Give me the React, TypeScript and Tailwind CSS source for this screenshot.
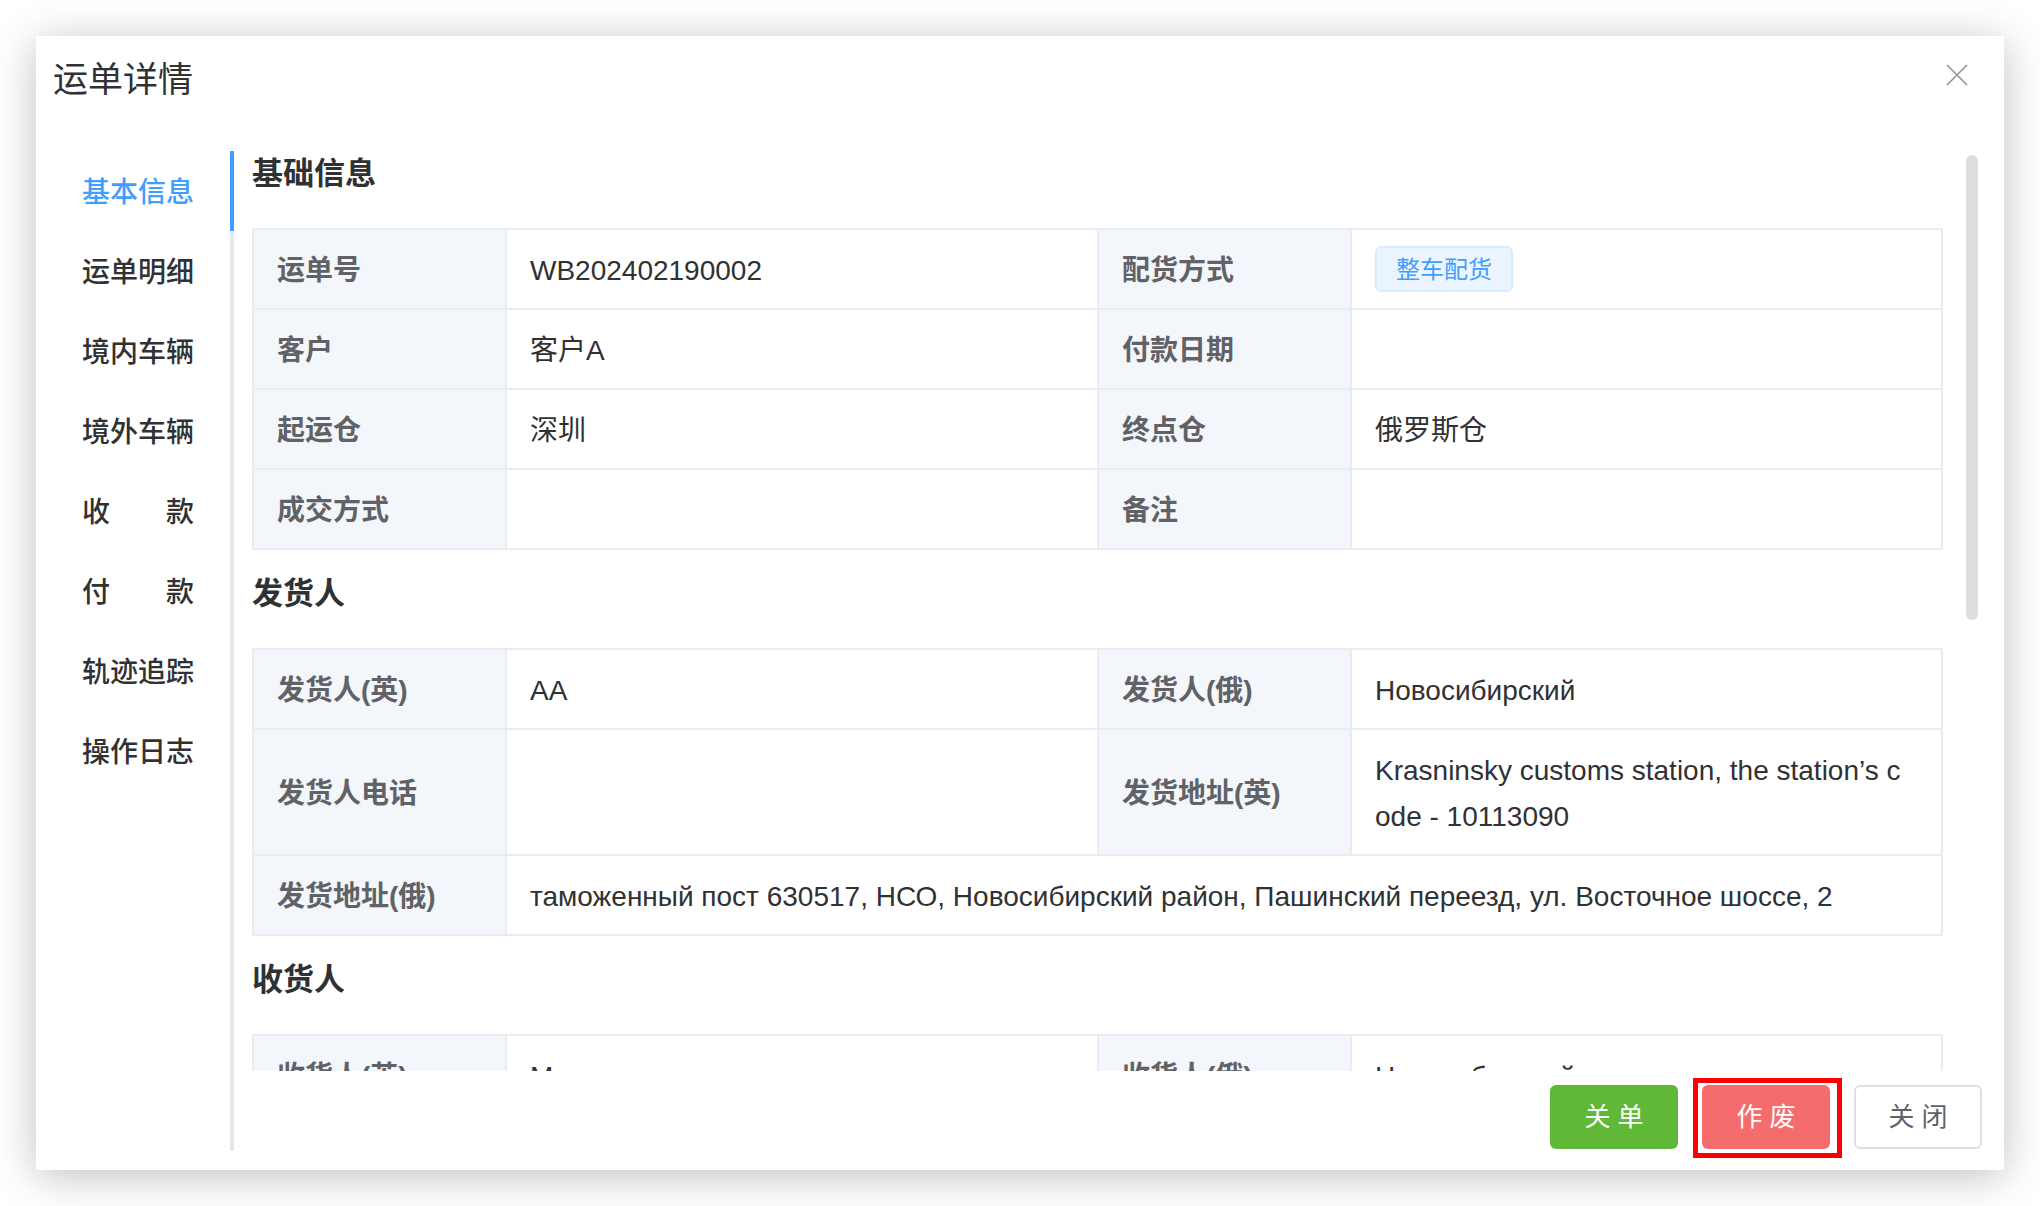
import React from "react";

const navItems = ["基本信息", "运单明细", "境内车辆", "境外车辆", "收款", "付款", "轨迹追踪", "操作日志"];

const labelCls = "border-2 border-[#E9ECF3] bg-[#F3F6FA] px-[23px] pt-[18px] pb-[14px] leading-[46px] font-bold text-[#606266] align-middle";
const valueCls = "border-2 border-[#E9ECF3] px-[23px] pt-[18px] pb-[14px] leading-[46px] text-[#303133] align-middle break-all";

const Heading: React.FC<{ text: string; first?: boolean }> = ({ text, first }) => (
    <div className={`${first ? "" : "mt-[21px]"} mb-[32px] h-[45px] leading-[45px] text-[31px] font-bold text-[#303133]`}>{text}</div>
);

const Cols = () => (
    <colgroup>
        <col className="w-[253px]" />
        <col className="w-[592px]" />
        <col className="w-[253px]" />
        <col className="w-[591px]" />
    </colgroup>
);

export default function App() {
    return (
        <div className="min-h-screen bg-white pt-[36px] pl-[36px] font-['Liberation_Sans','Noto_Sans_CJK_SC',sans-serif]">
            <div className="w-[1968px] h-[1134px] bg-white shadow-[0_6px_40px_rgba(0,0,0,0.25)] flex flex-col">
                {/* header */}
                <div className="h-[68px] pt-[20px] pl-[17px] pr-[36px] flex items-center justify-between">
                    <div className="leading-[48px] text-[35px] text-[#303133]">运单详情</div>
                    <svg width="22" height="22" viewBox="0 0 22 22" className="-mt-[10px]">
                        <path d="M1 1 L21 21 M21 1 L1 21" stroke="#909399" strokeWidth="1.6" fill="none" />
                    </svg>
                </div>

                {/* body */}
                <div className="mt-[47px] h-[1000px] flex pr-[22px]">
                    <div className="w-[198px] border-r-4 border-[#E4E7ED] h-full">
                        {navItems.map((item, i) => (
                            <div key={item} className="relative h-[80px] flex items-center justify-end pr-[36px]">
                                {item.length === 2 ? (
                                    <div className="w-[112px] pt-[4px] flex justify-between text-[28px] font-medium text-[#303133]">
                                        <span>{item[0]}</span>
                                        <span>{item[1]}</span>
                                    </div>
                                ) : (
                                    <div className={`pt-[4px] text-[28px] font-medium ${i === 0 ? "text-[#409EFF]" : "text-[#303133]"}`}>{item}</div>
                                )}
                                {i === 0 && <div className="absolute -right-[4px] top-0 w-[4px] h-[80px] bg-[#409EFF]" />}
                            </div>
                        ))}
                    </div>

                    <div className="ml-[17px] flex-1 flex flex-col">
                        <div className="relative h-[920px]">
                            <div className="w-[1692px] h-full overflow-hidden pl-[1px] text-[28px]">
                                <Heading text="基础信息" first />
                                <table className="w-[1689px] table-fixed border-collapse">
                                    <Cols />
                                    <tbody>
                                        <tr>
                                            <td className={labelCls}>运单号</td>
                                            <td className={valueCls}>WB202402190002</td>
                                            <td className={labelCls}>配货方式</td>
                                            <td className="border-2 border-[#E9ECF3] px-[23px] py-[16px] align-middle">
                                                <span className="inline-flex align-middle h-[46px] items-center pt-[2px] px-[19px] rounded-[6px] border-2 border-[#D9ECFF] bg-[#ECF5FF] text-[#409EFF] text-[24px] leading-none">整车配货</span>
                                            </td>
                                        </tr>
                                        <tr>
                                            <td className={labelCls}>客户</td>
                                            <td className={valueCls}>客户A</td>
                                            <td className={labelCls}>付款日期</td>
                                            <td className={valueCls}></td>
                                        </tr>
                                        <tr>
                                            <td className={labelCls}>起运仓</td>
                                            <td className={valueCls}>深圳</td>
                                            <td className={labelCls}>终点仓</td>
                                            <td className={valueCls}>俄罗斯仓</td>
                                        </tr>
                                        <tr>
                                            <td className={labelCls}>成交方式</td>
                                            <td className={valueCls}></td>
                                            <td className={labelCls}>备注</td>
                                            <td className={valueCls}></td>
                                        </tr>
                                    </tbody>
                                </table>

                                <Heading text="发货人" />
                                <table className="w-[1689px] table-fixed border-collapse">
                                    <Cols />
                                    <tbody>
                                        <tr>
                                            <td className={labelCls}>发货人(英)</td>
                                            <td className={valueCls}>AA</td>
                                            <td className={labelCls}>发货人(俄)</td>
                                            <td className={valueCls}>Новосибирский</td>
                                        </tr>
                                        <tr>
                                            <td className={labelCls}>发货人电话</td>
                                            <td className={valueCls}></td>
                                            <td className={labelCls}>发货地址(英)</td>
                                            <td className="border-2 border-[#E9ECF3] pl-[23px] pr-[40px] pt-[18px] pb-[14px] leading-[46px] text-[#303133] align-middle break-all">
                                                Krasninsky customs station, the station’s code - 10113090
                                            </td>
                                        </tr>
                                        <tr>
                                            <td className={labelCls}>发货地址(俄)</td>
                                            <td className={valueCls} colSpan={3}>
                                                таможенный пост 630517, НСО, Новосибирский район, Пашинский переезд, ул. Восточное шоссе, 2
                                            </td>
                                        </tr>
                                    </tbody>
                                </table>

                                <Heading text="收货人" />
                                <table className="w-[1689px] table-fixed border-collapse">
                                    <Cols />
                                    <tbody>
                                        <tr>
                                            <td className={labelCls}>收货人(英)</td>
                                            <td className={valueCls}>Mary</td>
                                            <td className={labelCls}>收货人(俄)</td>
                                            <td className={valueCls}>Новосибирский</td>
                                        </tr>
                                    </tbody>
                                </table>
                            </div>
                            <div className="absolute right-[4px] top-[4px] w-[12px] h-[465px] rounded-full bg-[#DDDEE0]" />
                        </div>

                        {/* footer */}
                        <div className="mt-[14px] flex justify-end gap-[24px]">
                            <button className="w-[128px] h-[64px] rounded-[6px] bg-[#5FB936] text-white text-[26px]">关 单</button>
                            <div className="relative">
                                <button className="w-[128px] h-[64px] rounded-[6px] bg-[#F56C6C] text-white text-[26px]">作 废</button>
                                <div className="absolute -left-[9px] -top-[7px] -right-[12px] -bottom-[9px] border-[5px] border-[#FF0000]" />
                            </div>
                            <button className="w-[128px] h-[64px] rounded-[6px] bg-white border-2 border-[#DCDFE6] text-[#606266] text-[26px]">关 闭</button>
                        </div>
                    </div>
                </div>
            </div>
        </div>
    );
}
